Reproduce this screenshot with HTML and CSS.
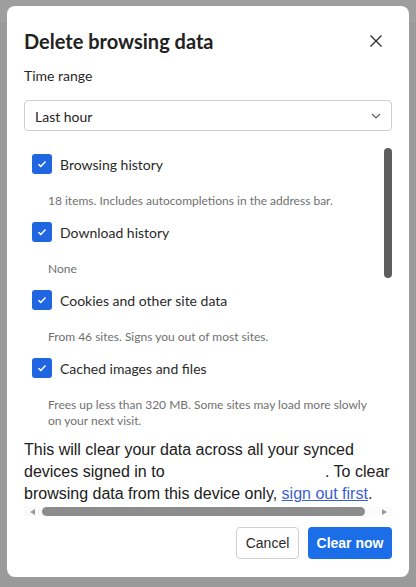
FILE: index.html
```html
<!DOCTYPE html>
<html lang="en">
<head>
<meta charset="utf-8">
<title>Delete browsing data</title>
<link rel="stylesheet" href="styles.css">
</head>
<body>
<div class="backdrop-top"></div>
<div class="dialog">
  <div class="header">
    <h1 class="title">Delete browsing data</h1>
    <button class="close" aria-label="Close">
      <svg width="12" height="12" viewBox="0 0 12 12"><path d="M0.5 0.5L11.5 11.5M11.5 0.5L0.5 11.5" stroke="#2b2b2b" stroke-width="1.3" fill="none"/></svg>
    </button>
  </div>
  <div class="field-label">Time range</div>
  <div class="select">
    <span>Last hour</span>
    <svg width="10" height="6" viewBox="0 0 10 6"><path d="M1 1L5 5L9 1" stroke="#5a5a5a" stroke-width="1.1" fill="none"/></svg>
  </div>
  <div class="scroller">
    <div class="list">
      <div class="item">
        <div class="row"><span class="check"><svg width="10" height="8" viewBox="0 0 10 8"><path d="M1.5 4.2L3.8 6.4L8.5 1.6" stroke="#fff" stroke-width="1.5" fill="none"/></svg></span><span class="label">Browsing history</span></div>
        <div class="desc">18 items. Includes autocompletions in the address bar.</div>
      </div>
      <div class="item">
        <div class="row"><span class="check"><svg width="10" height="8" viewBox="0 0 10 8"><path d="M1.5 4.2L3.8 6.4L8.5 1.6" stroke="#fff" stroke-width="1.5" fill="none"/></svg></span><span class="label">Download history</span></div>
        <div class="desc">None</div>
      </div>
      <div class="item">
        <div class="row"><span class="check"><svg width="10" height="8" viewBox="0 0 10 8"><path d="M1.5 4.2L3.8 6.4L8.5 1.6" stroke="#fff" stroke-width="1.5" fill="none"/></svg></span><span class="label">Cookies and other site data</span></div>
        <div class="desc">From 46 sites. Signs you out of most sites.</div>
      </div>
      <div class="item">
        <div class="row"><span class="check"><svg width="10" height="8" viewBox="0 0 10 8"><path d="M1.5 4.2L3.8 6.4L8.5 1.6" stroke="#fff" stroke-width="1.5" fill="none"/></svg></span><span class="label">Cached images and files</span></div>
        <div class="desc">Frees up less than 320 MB. Some sites may load more slowly<br>on your next visit.</div>
      </div>
    </div>
    <div class="vbar"></div>
  </div>
  <div class="sync">
    <span class="line">This will clear your data across all your synced</span>
    <span class="line">devices signed in to <span class="redacted"></span>. To clear</span>
    <span class="line">browsing data from this device only, <a href="#">sign out first</a>.</span>
  </div>
  <div class="hbar">
    <span class="arrow left"></span>
    <span class="thumb"></span>
    <span class="arrow right"></span>
  </div>
  <div class="actions">
    <button class="btn cancel">Cancel</button>
    <button class="btn primary">Clear now</button>
  </div>
</div>
</body>
</html>
```

FILE: styles.css
```css
* { box-sizing: border-box; }
html, body { margin: 0; padding: 0; }
body {
  width: 416px;
  height: 587px;
  background: #9a9a9a;
  padding: 6px 7px 0 7px;
  overflow: hidden;
  position: relative;
  font-family: Lato, "Noto Sans", sans-serif;
  color: #242424;
}
.backdrop-top {
  position: absolute;
  left: 0; top: 0; right: 0;
  height: 22px;
  border-bottom: 1px solid #a4a4a4;
  background: #9e9e9e;
}
.dialog {
  position: relative;
  width: 402px;
  height: 571px;
  background: #fff;
  border-radius: 8px;
  padding: 0 17px;
  display: flex;
  flex-direction: column;
}
.header {
  display: flex;
  justify-content: space-between;
  align-items: center;
  padding-top: 21px;
}
.title {
  margin: 0;
  font-size: 20px;
  font-weight: 700;
  line-height: 28px;
  color: #222;
}
.close {
  border: 0;
  background: none;
  padding: 0;
  margin-right: 10px;
  width: 12px;
  height: 12px;
  display: flex;
}
.field-label {
  margin-top: 11px;
  font-size: 14px;
  line-height: 20px;
  color: #2a2a2a;
}
.select {
  margin-top: 14px;
  height: 31px;
  border: 1px solid #cfcfcf;
  border-radius: 4px;
  display: flex;
  align-items: center;
  justify-content: space-between;
  padding: 1px 10px 0 10px;
  font-size: 14px;
  color: #242424;
}
.scroller {
  display: flex;
  margin-top: 8px;
  height: 292px;
}
.list {
  flex: 1;
  padding-top: 15px;
  padding-left: 8px;
}
.item { margin-bottom: 13px; }
.row {
  display: flex;
  align-items: center;
  gap: 8px;
  height: 20px;
}
.check {
  width: 20px;
  height: 20px;
  border-radius: 3px;
  background: #1f66e0;
  display: flex;
  align-items: center;
  justify-content: center;
}
.label { font-size: 14px; color: #2a2a2a; }
.desc {
  margin-top: 19px;
  padding-left: 16px;
  font-size: 12px;
  line-height: 16px;
  color: #707070;
}
.vbar {
  width: 8px;
  height: 130px;
  margin-top: 9px;
  background: #5e5e5e;
  border-radius: 4px;
}
.sync {
  margin-top: 8px;
  font-family: "Liberation Sans", Arial, sans-serif;
  font-size: 16px;
  line-height: 22px;
  color: #202020;
  white-space: nowrap;
}
.sync .line { display: block; }
.redacted { display: inline-block; width: 156px; }
.sync a { color: #3a5fd0; text-decoration: underline; }
.hbar {
  margin-top: 2px;
  height: 9px;
  display: flex;
  align-items: center;
  padding: 0 5px 0 6px;
  background: #fbfbfb;
}
.arrow {
  width: 0; height: 0;
  border-top: 3.5px solid transparent;
  border-bottom: 3.5px solid transparent;
}
.arrow.left { border-right: 5px solid #9a9a9a; }
.arrow.right { border-left: 5px solid #9a9a9a; }
.thumb {
  margin: 0 auto 0 7px;
  width: 323px;
  height: 9px;
  border-radius: 4.5px;
  background: #8c8c8c;
}
.actions {
  margin-top: 11px;
  display: flex;
  justify-content: flex-end;
  gap: 9px;
}
.btn {
  height: 32px;
  border-radius: 4px;
  font-family: "Liberation Sans", Arial, sans-serif;
  font-size: 14px;
  padding: 0;
}
.cancel {
  width: 63px;
  background: #fff;
  border: 1px solid #d0d0d0;
  color: #2a2a2a;
}
.primary {
  width: 84px;
  background: #1b6ee8;
  border: 0;
  color: #fff;
  font-weight: 700;
}
```
